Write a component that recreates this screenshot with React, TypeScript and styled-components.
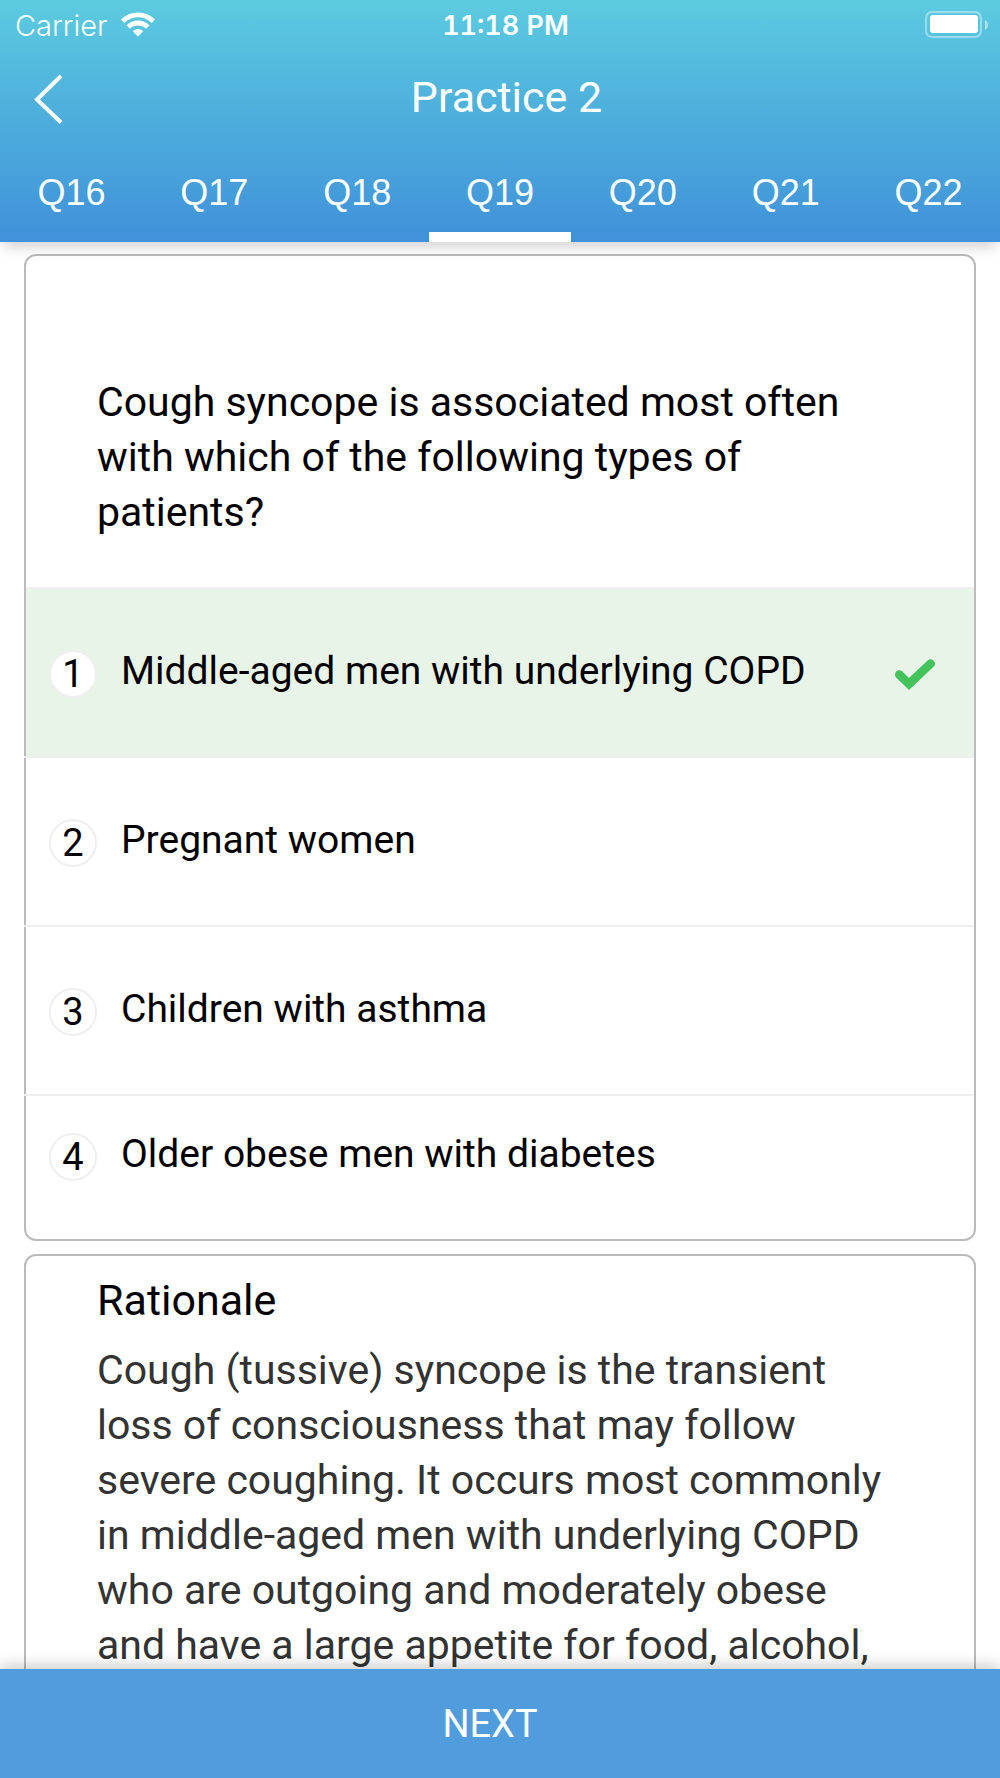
import React, { useState } from "react";
import styled, { createGlobalStyle } from "styled-components";

const GlobalStyle = createGlobalStyle`
  *, *::before, *::after { box-sizing: border-box; }
  body {
    margin: 0;
    background: #fff;
    color: #000;
    font-family: Roboto, "Liberation Sans", sans-serif;
  }
  button { border: 0; padding: 0; background: none; color: inherit; font: inherit; cursor: pointer; }
`;

const Screen = styled.div`
  display: flex;
  flex-direction: column;
  height: 100vh;
`;

const Header = styled.header`
  position: relative;
  z-index: 1;
  flex: none;
  color: #fff;
  background: linear-gradient(#5ccbdf 0%, #4eb0dc 45%, #4091d9 100%);
  box-shadow: 0 8px 14px -4px rgba(0, 0, 0, 0.2);
`;

const StatusBar = styled.div`
  display: grid;
  grid-template-columns: 1fr auto 1fr;
  align-items: center;
  height: 50px;
  padding: 2px 12px 0 15px;
  font: 400 29px/48px Inter, Roboto, sans-serif;
`;

const Carrier = styled.div`
  display: flex;
  align-items: center;
  gap: 14px;
  font-weight: 300;
`;

const Clock = styled.time`
  padding-left: 8px;
  font-size: 27px;
  font-weight: 600;
  font-variant-numeric: tabular-nums;
`;

const BatteryIcon = styled.svg`
  justify-self: end;
`;

const NavBar = styled.div`
  display: flex;
  align-items: center;
  height: 96px;
  padding: 0 58px 2px 26px;
`;

const BackButton = styled.button`
  display: flex;
  align-items: center;
  width: 45px;
  height: 64px;
  padding-left: 8px;
`;

const Title = styled.h1`
  flex: 1;
  margin: 0;
  font-size: 43px;
  line-height: 50px;
  font-weight: 400;
  text-align: center;
`;

const Tabs = styled.nav`
  display: flex;
  height: 96px;
`;

const Tab = styled.button<{ $active: boolean }>`
  flex: 1 1 0;
  padding-top: 8px;
  border-bottom: 10px solid ${(p) => (p.$active ? "#fff" : "transparent")};
  font-family: "Liberation Sans", Arial, sans-serif;
  font-size: 36px;
`;

const Content = styled.main`
  flex: 1;
  min-height: 0;
  overflow-y: auto;
  scrollbar-width: none;
  display: flex;
  flex-direction: column;
  gap: 13px;
  padding: 12px 24px;
`;

const Card = styled.section`
  flex: none;
  border: 2px solid #bbb;
  border-radius: 12px;
`;

const Question = styled.h2`
  margin: 0;
  padding: 119px 71px 47px;
  font-size: 41px;
  line-height: 55px;
  font-weight: 400;
`;

const Options = styled.ol`
  margin: 0;
  padding: 0;
  list-style: none;
`;

const OptionItem = styled.li`
  &:not(:first-child) { margin-left: -2px; }
  &:not(:first-child) > button { padding-left: 25px; }
  &:last-child > button { padding-top: 37px; }
`;

const Option = styled.button<{ $correct: boolean }>`
  display: flex;
  align-items: flex-start;
  gap: 24px;
  width: 100%;
  padding: 61px 39px 58px 23px;
  border-top: 2px solid #efefef;
  background: ${(p) => (p.$correct ? "#e9f4e8" : "transparent")};
  background-clip: padding-box;
  text-align: left;
`;

const Badge = styled.span`
  display: flex;
  flex: none;
  align-items: center;
  justify-content: center;
  width: 48px;
  height: 48px;
  border: 2px solid #efefef;
  border-radius: 50%;
  background: #fff;
  font-size: 38px;
  line-height: 44px;
`;

const OptionText = styled.span`
  flex: 1;
  font-size: 39px;
  line-height: 42px;
`;

const CheckMark = styled.svg`
  flex: none;
  align-self: center;
`;

const Rationale = styled(Card)`
  padding: 19px 71px 60px;
`;

const RationaleTitle = styled.h2`
  margin: 0 0 18px;
  font-size: 43px;
  line-height: 50px;
  font-weight: 400;
`;

const RationaleText = styled.p`
  margin: 0;
  color: #333;
  font-size: 41px;
  line-height: 55px;
`;

const Footer = styled.footer`
  position: relative;
  z-index: 1;
  flex: none;
  background: #509cdc;
  box-shadow: 0 -4px 14px rgba(0, 0, 0, 0.2);
`;

const NextButton = styled.button`
  width: 100%;
  height: 109px;
  padding-right: 20px;
  color: #fff;
  font-size: 38px;
`;

const tabs = ["Q16", "Q17", "Q18", "Q19", "Q20", "Q21", "Q22"];

const options = [
  { text: "Middle-aged men with underlying COPD", correct: true },
  { text: "Pregnant women", correct: false },
  { text: "Children with asthma", correct: false },
  { text: "Older obese men with diabetes", correct: false },
];

export default function App() {
  const [active, setActive] = useState("Q19");

  return (
    <Screen>
      <GlobalStyle />
      <Header>
        <StatusBar>
          <Carrier>
            Carrier
            <svg width="34" height="28" viewBox="0 0 34 28" fill="none" stroke="#fff" aria-hidden="true">
              <path d="M1.6 9.2a22 22 0 0 1 30.8 0" strokeWidth="4.8" />
              <path d="M7.2 15a14 14 0 0 1 19.6 0" strokeWidth="4.8" />
              <path d="M17 24.6l-5.2-5.4a7.4 7.4 0 0 1 10.4 0z" fill="#fff" stroke="none" />
            </svg>
          </Carrier>
          <Clock>11:18 PM</Clock>
          <BatteryIcon width="63" height="30" viewBox="0 0 63 30" aria-hidden="true">
            <rect x="1" y="1" width="55" height="25" rx="6" fill="none" stroke="#fff" strokeOpacity="0.4" strokeWidth="2" />
            <rect x="5" y="4" width="48" height="18" rx="3" fill="#fff" />
            <path d="M60 9c4 2 4 8 0 10z" fill="#fff" fillOpacity="0.5" />
          </BatteryIcon>
        </StatusBar>
        <NavBar>
          <BackButton aria-label="Back">
            <svg width="29" height="54" viewBox="0 0 29 54" fill="none" stroke="#fff" strokeWidth="4">
              <path d="M27 6L3 29.500l24 23" />
            </svg>
          </BackButton>
          <Title>Practice 2</Title>
        </NavBar>
        <Tabs>
          {tabs.map((tab) => (
            <Tab key={tab} $active={tab === active} onClick={() => setActive(tab)}>
              {tab}
            </Tab>
          ))}
        </Tabs>
      </Header>
      <Content>
        <Card>
          <Question>
            Cough syncope is associated most often with which of the following types of patients?
          </Question>
          <Options>
            {options.map((option, index) => (
              <OptionItem key={option.text}>
                <Option $correct={option.correct}>
                  <Badge>{index + 1}</Badge>
                  <OptionText>{option.text}</OptionText>
                  {option.correct && (
                    <CheckMark width="40" height="31" viewBox="0 0 40 31" role="img" aria-label="Correct">
                      <path
                        d="M1.3 12.6a4.3 4.3 0 0 1 6.1 0l6.6 6.4L32.6 1.4a4.4 4.4 0 0 1 6.2 6.2L14 31 1.3 18.7a4.3 4.3 0 0 1 0-6.1z"
                        fill="#43c35a"
                      />
                    </CheckMark>
                  )}
                </Option>
              </OptionItem>
            ))}
          </Options>
        </Card>
        <Rationale>
          <RationaleTitle>Rationale</RationaleTitle>
          <RationaleText>
            Cough (tussive) syncope is the transient loss of consciousness that may follow severe
            coughing. It occurs most commonly in middle-aged men with underlying COPD who are outgoing
            and moderately obese and have a large appetite for food, alcohol,
          </RationaleText>
        </Rationale>
      </Content>
      <Footer>
        <NextButton>NEXT</NextButton>
      </Footer>
    </Screen>
  );
}
